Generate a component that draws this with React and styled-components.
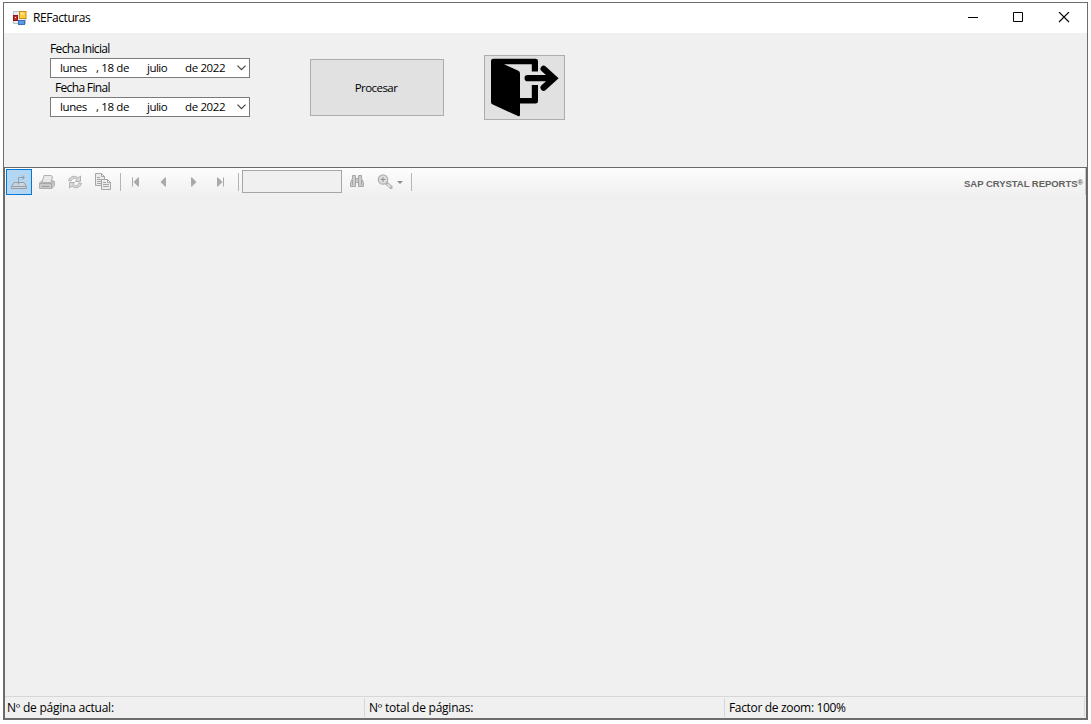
import React from "react";
import styled, { createGlobalStyle } from "styled-components";

const GlobalStyle = createGlobalStyle`
  * { box-sizing: border-box; }
  body { margin: 0; background: #fff; overflow: hidden; }
`;
const Desktop = styled.div`
  width: 1091px;
  height: 724px;
  padding: 2px 3px 4px;
  background: #fff;
  font-family: "Open Sans", "Noto Sans", sans-serif;
  font-size: 12px;
  color: #000;
`;
const Window = styled.main`
  width: 1085px;
  height: 718px;
  border: 1px solid #6e6c6d;
  border-bottom-width: 2px;
  background: #f0f0f0;
  display: flex;
  flex-direction: column;
`;
const Label = styled.span`
  display: inline-block;
  white-space: pre;
  line-height: 16px;
  letter-spacing: ${(p) => p.$track || 0}px;
`;
const TitleBar = styled.header`
  height: 30px;
  flex: none;
  background: #fff;
  display: flex;
  align-items: center;
  padding-left: 9px;
  svg { display: block; }
`;
const Title = styled(Label)`
  margin-left: 6px;
  flex: 1;
`;
const WindowButton = styled.button`
  width: 46px;
  height: 30px;
  padding: 0;
  border: 0;
  background: none;
  display: grid;
  place-items: center;
`;
const FormPanel = styled.section`
  height: 134px;
  flex: none;
  display: flex;
  align-items: flex-start;
  padding-left: 46px;
`;
const Dates = styled.div`
  width: 200px;
  padding-top: 8px;
  display: flex;
  flex-direction: column;
`;
const DateLabel = styled(Label)`
  height: 17px;
  padding-left: ${(p) => p.$indent || 0}px;
`;
const DateField = styled.div`
  height: 20px;
  margin-bottom: 2px;
  border: 1px solid #7a7a7a;
  background: #fff;
  display: grid;
  grid-template-columns: 36px 51px 38px 52px 1fr;
  padding-left: 9px;
  align-items: center;
  font-size: 11.5px;
`;
const ProcessButton = styled.button`
  width: 134px;
  height: 57px;
  margin: 26px 0 0 60px;
  padding: 0 2px 0 0;
  border: 1px solid #adadad;
  background: #e1e1e1;
  font: inherit;
  font-size: 11.5px;
  color: #000;
`;
const ExitButton = styled.button`
  width: 81px;
  height: 65px;
  margin: 22px 0 0 40px;
  padding: 0;
  border: 1px solid #adadad;
  background: #e1e1e1;
  svg { display: block; }
`;
const Viewer = styled.section`
  flex: 1;
  min-height: 0;
  border-top: 1px solid #696969;
  border-left: 1px solid #696969;
  border-right: 1px solid #696969;
  display: flex;
  flex-direction: column;
`;
const Toolbar = styled.div`
  height: 27px;
  flex: none;
  display: flex;
  align-items: center;
  padding-left: 1px;
  background: linear-gradient(#fdfdfd, #f0f0f0);
`;
const Tool = styled.button`
  width: ${(p) => p.$w || 28}px;
  height: 26px;
  padding: 0;
  border: 1px solid ${(p) => (p.$active ? "#0078d7" : "transparent")};
  background: ${(p) => (p.$active ? "#b3d7f3" : "none")};
  display: grid;
  place-items: center;
  svg { display: block; }
`;
const Divider = styled.i`
  width: 1px;
  height: 18px;
  background: #b5b5b5;
  margin-left: ${(p) => p.$left || 0}px;
  margin-right: ${(p) => p.$right || 0}px;
`;
const PageInput = styled.input`
  width: 100px;
  height: 23px;
  border: 1px solid #a6a6a6;
  background: #f0f0f0;
  padding: 0;
`;
const Brand = styled.div`
  flex: 1;
  height: 27px;
  border-right: 1px solid #c8c8c8;
  display: flex;
  justify-content: flex-end;
  font: bold 9.5px/31px "Liberation Sans", sans-serif;
  letter-spacing: -0.04px;
  color: #626262;
  white-space: pre;
  padding-right: 2px;
`;
const Registered = styled.span`
  font-size: 7.5px;
  line-height: 30px;
`;
const Report = styled.div`
  flex: 1;
`;
const StatusBar = styled.footer`
  height: 22px;
  flex: none;
  border-top: 1px solid #d7d7d7;
  display: flex;
  padding-top: 1px;
`;
const StatusCell = styled.div`
  width: ${(p) => p.$w}px;
  height: 19px;
  border-right: 1px solid #d7d7d7;
  padding: 1px 0 0 ${(p) => p.$pad}px;
`;

const AppIcon = () => (
  <svg width="14" height="14" viewBox="0 0 14 14">
    <rect x=".5" y=".5" width="12" height="12" fill="#e9edf3" stroke="#b8c0ce" />
    <rect x="6.5" y=".5" width="6.5" height="7" fill="#ffce3d" stroke="#c98d14" />
    <rect x="7.5" y="1.5" width="3" height="2" fill="#ffe99a" />
    <rect x=".5" y="4.5" width="4" height="5" fill="#c52a26" stroke="#8e1717" />
    <rect x="2" y="6" width="1" height="1" fill="#fff" />
    <rect x="5.5" y="9.5" width="6" height="4" fill="#5b9ae9" stroke="#3a6dbb" />
  </svg>
);
const Chevron = () => (
  <svg width="9" height="6" viewBox="0 0 9 6">
    <path d="M.5.7 4.5 4.7 8.5.7" fill="none" stroke="#444" strokeWidth="1.2" />
  </svg>
);
const ExitIcon = () => (
  <svg width="79" height="63" viewBox="5 6 79 63">
    <path d="M11 11q0-2.3 2.3-2.3H55.5Q58 8.7 58 11V21.5H51.8V14.3H24L38.3 20.8Q40 21.6 40 23.5V64.8Q40 67 38 66.1L12.3 54.3Q11 53.7 11 52Z" />
    <path d="M51.8 35H58V51.2Q58 53.6 55.6 53.6H39V48H51.8Z" />
    <path d="M47.6 28.2H73M63.6 18.8 74 28.2 63.6 37.6" fill="none" stroke="#000" strokeWidth="6.2" strokeLinecap="round" strokeLinejoin="miter" />
  </svg>
);
const ExportIcon = () => (
  <svg width="18" height="16" viewBox="0 0 18 16" fill="none" stroke="#969da4">
    <path d="M1.5 12.5 4 8.5H14L16.5 12.5V14.5H1.5Z" fill="#c8d6e1" />
    <path d="M2 12.5H16M8.5 10.5V3.5H14M12 1.5 14.5 3.5 12 5.5" />
  </svg>
);
const PrintIcon = () => (
  <svg width="18" height="16" viewBox="0 0 18 16" stroke="#b0b0b0">
    <path d="M1.5 9 4 6.5H14.5L16.5 7.5V11.5L14 14.5H1.5Z" fill="#c8c8c8" />
    <path d="M6 1.5H13L14.5 2.5 13 8.5H4Z" fill="#e9e9e9" />
    <path d="M1.5 9.5H13.5L16 7.5M13.5 9.5V14" fill="none" stroke="#a8a8a8" />
    <path d="M4 12.5H11" stroke="#999" />
  </svg>
);
const RefreshIcon = () => (
  <svg width="16" height="14" viewBox="0 0 16 14" fill="#dadada" stroke="#ababab" strokeWidth=".9">
    <path d="M1.5 5.5C3 1 8.5 0 11 3L13.5 1V6.5H8.5L10 4.7C8 2.5 5 3 4 6Z" />
    <path d="M14.5 8.5C13 13 7.5 14 5 11L2.5 13V7.5H7.5L6 9.3C8 11.5 11 11 12 8Z" />
  </svg>
);
const CopyIcon = () => (
  <svg width="18" height="18" viewBox="0 0 18 18" stroke="#a6a6a6" fill="#ececec">
    <path d="M1.5.5H7.5L10.5 3.5V12.5H1.5ZM7.5.5V3.5H10.5M3 4.5H6M3 6.5H8M3 8.5H8M3 10.5H7" />
    <path d="M7.5 6.5H13.5L16.5 9.5V16.5H7.5ZM13.5 6.5V9.5H16.5M9 9.5H12M9 11.5H15M9 13.5H15" />
  </svg>
);
const NavIcon = ({ back, end }) => (
  <svg width="8" height="10" viewBox="0 0 8 10" fill="#a9a9a9">
    {back ? <path d={end ? "M0 .5H1V9.5H0ZM7 .5V9.5H6L1.5 5 6 .5Z" : "M6 .5V9.5H5L.5 5 5 .5Z"} /> : <path d={end ? "M6 .5H7V9.5H6ZM0 .5V9.5H1L5.5 5 1 .5Z" : "M2 .5V9.5H3L7.5 5 3 .5Z"} />}
  </svg>
);
const FindIcon = () => (
  <svg width="14" height="13" viewBox="0 0 14 13" fill="#cdcdcd" stroke="#a6a6a6">
    <path d="M.5 11.5V7.5L2.5 3.5V.5H5.5V3.5H8.5V.5H11.5V3.5L13.5 7.5V11.5H8.5V7.5H5.5V11.5Z" />
    <path d="M5.5 3V8M8.5 3V8M2.5 5V10M11.5 5V10" fill="none" />
  </svg>
);
const ZoomIcon = () => (
  <svg width="16" height="16" viewBox="0 0 16 16" fill="none" stroke="#b2b2b2">
    <path d="m9.5 9.3 4.5 4" strokeWidth="3.4" strokeLinecap="round" />
    <path d="m10.5 10.2 3 2.7" stroke="#ececec" strokeWidth="1.3" />
    <circle cx="6" cy="5.5" r="4.7" fill="#dedede" strokeWidth="1.3" />
    <path d="M3.5 5.5H8.5M6 3V8" stroke="#929292" />
  </svg>
);

const DateRow = () => (
  <DateField>
    <Label $track={-0.4}>lunes</Label>
    <Label $track={-0.36}>, 18 de</Label>
    <Label $track={-0.5}>julio</Label>
    <Label $track={-0.36}>de 2022</Label>
    <Chevron />
  </DateField>
);

export default function App() {
  return (
    <>
      <GlobalStyle />
      <Desktop>
        <Window>
          <TitleBar>
            <AppIcon />
            <Title $track={-0.43}>REFacturas</Title>
            <WindowButton aria-label="Minimizar">
              <svg width="12" height="12"><path d="M2 5.5H12" stroke="#000" /></svg>
            </WindowButton>
            <WindowButton aria-label="Maximizar">
              <svg width="12" height="12"><path d="M1.5.5H10.5V9.5H1.5Z" fill="none" stroke="#000" /></svg>
            </WindowButton>
            <WindowButton aria-label="Cerrar">
              <svg width="12" height="12"><path d="M1 0 11 10M11 0 1 10" stroke="#000" strokeWidth="1.1" /></svg>
            </WindowButton>
          </TitleBar>
          <FormPanel>
            <Dates>
              <DateLabel $track={-0.64}>Fecha Inicial</DateLabel>
              <DateRow />
              <DateLabel $indent={5} $track={-0.66}>Fecha Final</DateLabel>
              <DateRow />
            </Dates>
            <ProcessButton><Label $track={-0.55}>Procesar</Label></ProcessButton>
            <ExitButton aria-label="Salir"><ExitIcon /></ExitButton>
          </FormPanel>
          <Viewer>
            <Toolbar>
              <Tool $active $w={26}><ExportIcon /></Tool>
              <Tool $w={30}><PrintIcon /></Tool>
              <Tool $w={26}><RefreshIcon /></Tool>
              <Tool $w={30}><CopyIcon /></Tool>
              <Divider $left={2} $right={1} />
              <Tool><NavIcon back end /></Tool>
              <Tool><NavIcon back /></Tool>
              <Tool $w={29}><NavIcon /></Tool>
              <Tool $w={28}><NavIcon end /></Tool>
              <Divider $left={3} $right={3} />
              <PageInput />
              <Tool $w={30}><FindIcon /></Tool>
              <Tool $w={25}><ZoomIcon /></Tool>
              <svg width="6" height="4"><path d="M0 1H6L3 4Z" fill="#8c8c8c" /></svg>
              <Divider $left={8} />
              <Brand>SAP CRYSTAL REPORTS<Registered>®</Registered></Brand>
            </Toolbar>
            <Report />
            <StatusBar>
              <StatusCell $w={360} $pad={2}><Label $track={-0.23}>Nº de página actual:</Label></StatusCell>
              <StatusCell $w={360} $pad={4}><Label $track={-0.24}>Nº total de páginas:</Label></StatusCell>
              <StatusCell $w={360} $pad={4}><Label $track={-0.33}>Factor de zoom: 100%</Label></StatusCell>
            </StatusBar>
          </Viewer>
        </Window>
      </Desktop>
    </>
  );
}
